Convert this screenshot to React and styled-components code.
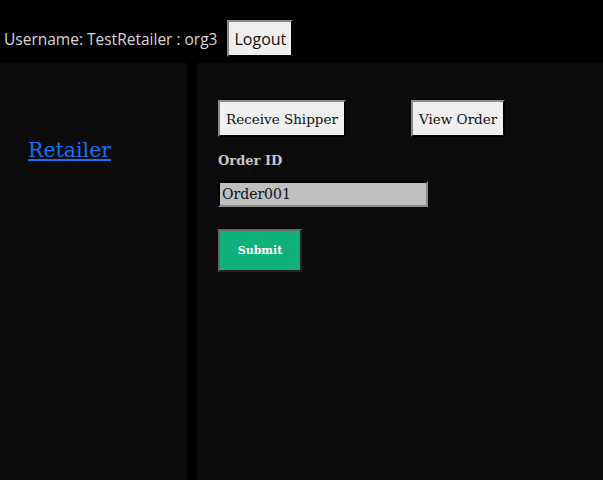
import React from "react";
import styled, { createGlobalStyle } from "styled-components";

const Global = createGlobalStyle`
  html, body { margin: 0; padding: 0; background: #000; }
  body { font-family: "DejaVu Serif", serif; }
`;

const Page = styled.div`
  display: flex;
  flex-direction: column;
  min-height: 100vh;
  background: #000;
`;

const Header = styled.header`
  display: flex;
  align-items: center;
  gap: 10px;
  height: 63px;
  box-sizing: border-box;
  padding: 14px 4px 0;
  font-family: "Open Sans", "Noto Sans", sans-serif;
  font-size: 15.5px;
  color: #d8d8d8;
`;

const Btn = styled.button`
  font-family: ${(p) => (p.$sans ? '"Open Sans", "Noto Sans", sans-serif' : '"DejaVu Serif", serif')};
  font-size: ${(p) => (p.$sans ? "16px" : "13.5px")};
  color: #111;
  background: #efefef;
  border: 2px outset #767676;
  border-color: #8a8a8a #3a3a3a #3a3a3a #8a8a8a;
  height: 37px;
  padding: 0 ${(p) => (p.$sans ? "5px" : "6px")};
  white-space: nowrap;
  cursor: pointer;
`;

const Body = styled.div`
  flex: 1;
  display: grid;
  grid-template-columns: 187px 1fr;
  column-gap: 10px;
`;

const Sidebar = styled.aside`
  background: #0b0b0b;
  padding: 75px 0 0 28px;
`;

const NavLink = styled.a`
  font-family: "DejaVu Serif", serif;
  font-size: 20.5px;
  color: #1b6ff0;
  text-decoration: underline;
`;

const Main = styled.main`
  background: #0b0b0b;
  padding: 37px 0 0 21px;
  display: flex;
  flex-direction: column;
  align-items: flex-start;
`;

const Tabs = styled.div`
  display: flex;
  gap: 65px;
`;

const Label = styled.label`
  margin-top: 16px;
  font-size: 13px;
  font-weight: bold;
  color: #c8c8c8;
  font-family: "DejaVu Serif", serif;
`;

const Input = styled.input`
  margin-top: 13px;
  width: 210px;
  height: 26px;
  box-sizing: border-box;
  background: #bfbfbf;
  border: 2px inset #767676;
  border-color: #3a3a3a #8a8a8a #8a8a8a #3a3a3a;
  font-family: "DejaVu Serif", serif;
  font-size: 14px;
  color: #111;
  padding: 0 2px;
`;

const Submit = styled.button`
  margin-top: 22px;
  width: 84px;
  height: 43px;
  background: #0fb07a;
  border: 2px solid #555;
  border-color: #666 #222 #222 #666;
  color: #fff;
  font-family: "DejaVu Serif", serif;
  font-weight: bold;
  font-size: 11px;
  cursor: pointer;
`;

export default function App() {
  return (
    <>
      <Global />
      <Page>
        <Header>
          <span>Username: TestRetailer : org3</span>
          <Btn $sans>Logout</Btn>
        </Header>
        <Body>
          <Sidebar>
            <NavLink href="#">Retailer</NavLink>
          </Sidebar>
          <Main>
            <Tabs>
              <Btn>Receive Shipper</Btn>
              <Btn>View Order</Btn>
            </Tabs>
            <Label>Order ID</Label>
            <Input defaultValue="Order001" />
            <Submit>Submit</Submit>
          </Main>
        </Body>
      </Page>
    </>
  );
}
